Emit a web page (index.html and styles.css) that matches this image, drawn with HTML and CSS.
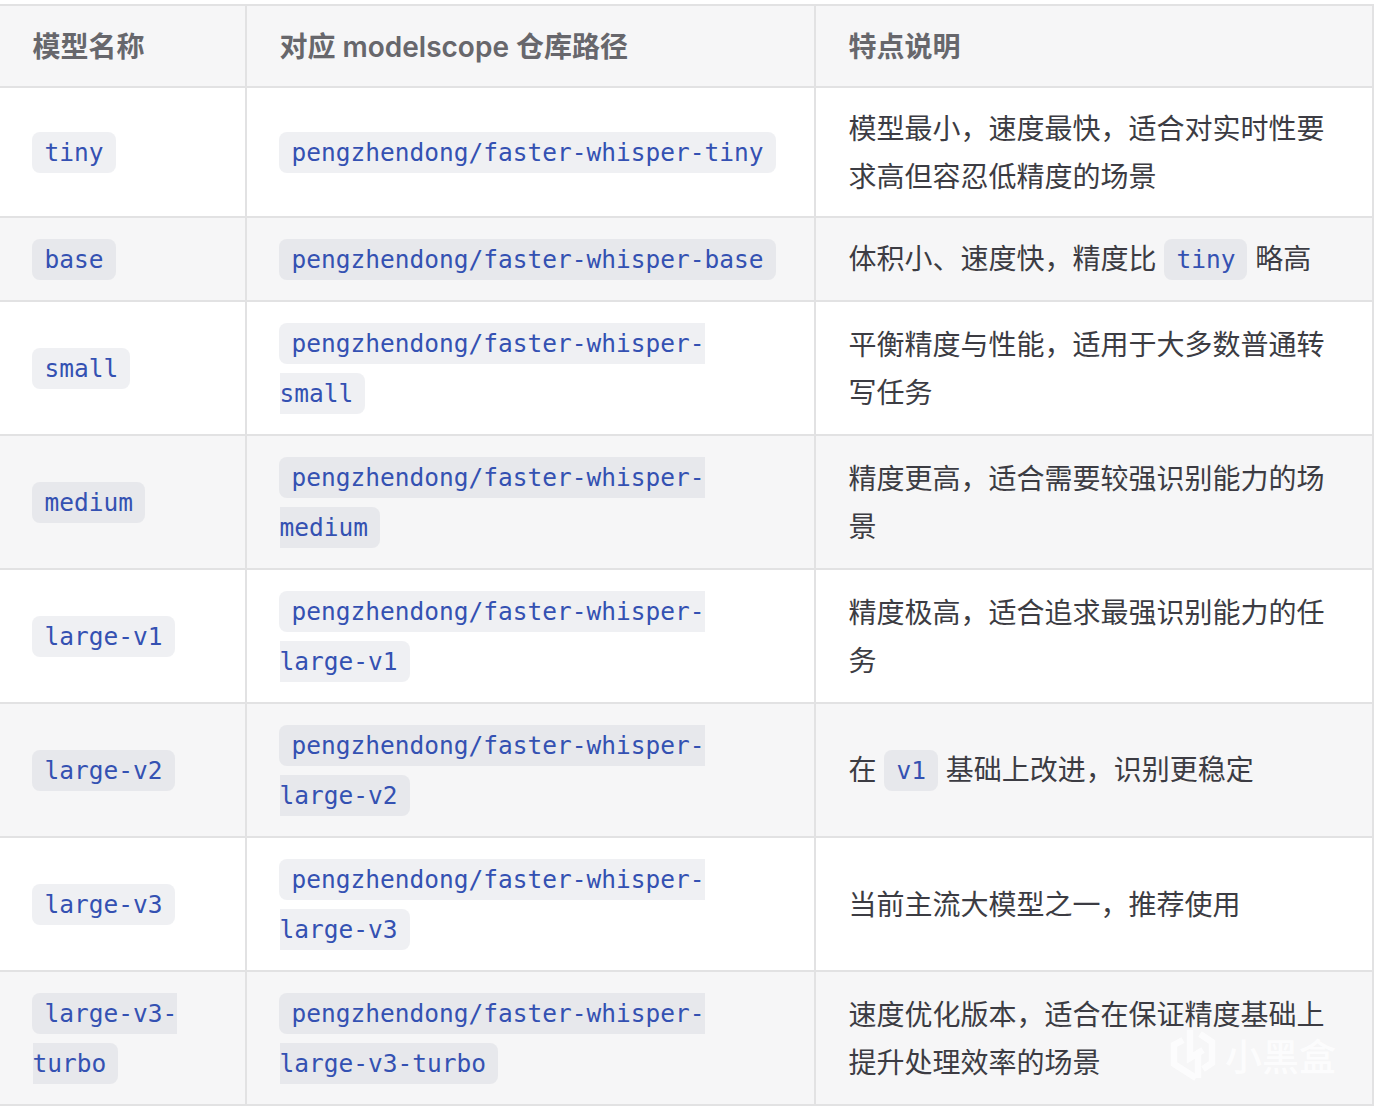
FILE: index.html
```html
<!DOCTYPE html>
<html lang="zh">
<head>
<meta charset="utf-8">
<title>模型</title>
<link rel="stylesheet" href="styles.css">
</head>
<body>
<table class="models">
<colgroup><col class="c1"><col class="c2"><col class="c3"></colgroup>
<thead><tr><th>模型名称</th><th>对应 modelscope 仓库路径</th><th>特点说明</th></tr></thead>
<tbody>
<tr><td><code>tiny</code></td><td><code>pengzhendong/faster-whisper-tiny</code></td><td>模型最小，速度最快，适合对实时性要求高但容忍低精度的场景</td></tr>
<tr><td><code>base</code></td><td><code>pengzhendong/faster-whisper-base</code></td><td>体积小、速度快，精度比 <code>tiny</code> 略高</td></tr>
<tr><td><code>small</code></td><td><code>pengzhendong/faster-whisper-small</code></td><td>平衡精度与性能，适用于大多数普通转写任务</td></tr>
<tr><td><code>medium</code></td><td><code>pengzhendong/faster-whisper-medium</code></td><td>精度更高，适合需要较强识别能力的场景</td></tr>
<tr><td><code>large-v1</code></td><td><code>pengzhendong/faster-whisper-large-v1</code></td><td>精度极高，适合追求最强识别能力的任务</td></tr>
<tr><td><code>large-v2</code></td><td><code>pengzhendong/faster-whisper-large-v2</code></td><td>在 <code>v1</code> 基础上改进，识别更稳定</td></tr>
<tr><td><code>large-v3</code></td><td><code>pengzhendong/faster-whisper-large-v3</code></td><td>当前主流大模型之一，推荐使用</td></tr>
<tr><td><code>large-v3-turbo</code></td><td><code>pengzhendong/faster-whisper-large-v3-turbo</code></td><td>速度优化版本，适合在保证精度基础上提升处理效率的场景</td></tr>
</tbody>
</table>
<div class="watermark">
<svg class="wm-logo" viewBox="0 0 46 54" width="46" height="54" aria-hidden="true"><g fill="none" stroke="#fff" stroke-width="6.5" stroke-linejoin="miter"><path d="M13 12 L4 17 V36 L26 50"/><path d="M20 2 V30 L33 22"/><path d="M28 26 V50"/><path d="M30 6 L42 14 V35 L33 41"/></g></svg>
<span class="wm-text">小黑盒</span>
</div>
</body>
</html>
```
FILE: styles.css
```css
html, body { margin: 0; padding: 0; background: #fff; }
body {
  position: relative;
  width: 1376px;
  height: 1108px;
  overflow: hidden;
  padding-top: 4px;
  box-sizing: border-box;
  font-family: Inter, "Noto Sans CJK SC", sans-serif;
  font-size: 28px;
  line-height: 48px;
  color: #3c3c43;
}
.models {
  border-collapse: collapse;
  table-layout: fixed;
  width: 1376px;
  margin-left: -2px;
}
.c1 { width: 247px; }
.c2 { width: 569px; }
.c3 { width: 558px; }
.models th, .models td {
  border: 2px solid #e2e2e3;
  padding: 17px 32px 15px 32.5px;
  text-align: left;
  vertical-align: middle;
}
.models th {
  background: #f6f6f7;
  color: #67676c;
  font-weight: 600;
}
.models tbody tr:nth-child(even) { background: #f6f6f7; }
code {
  position: relative;
  top: -1px;
  margin-left: -0.6px;
  font-family: "DejaVu Sans Mono", monospace;
  font-size: 24.5px;
  color: #3451b2;
  background: rgba(142, 150, 170, 0.14);
  border-radius: 8px;
  padding: 6px 12px 6px 12.6px;
}
.watermark {
  position: absolute;
  left: 1170px;
  top: 1028px;
  display: flex;
  align-items: center;
  gap: 9px;
  opacity: 0.75;
}
.wm-text {
  font-family: "Noto Sans CJK SC", sans-serif;
  font-size: 37px;
  line-height: 38px;
  font-weight: 500;
  color: #fff;
}
```
